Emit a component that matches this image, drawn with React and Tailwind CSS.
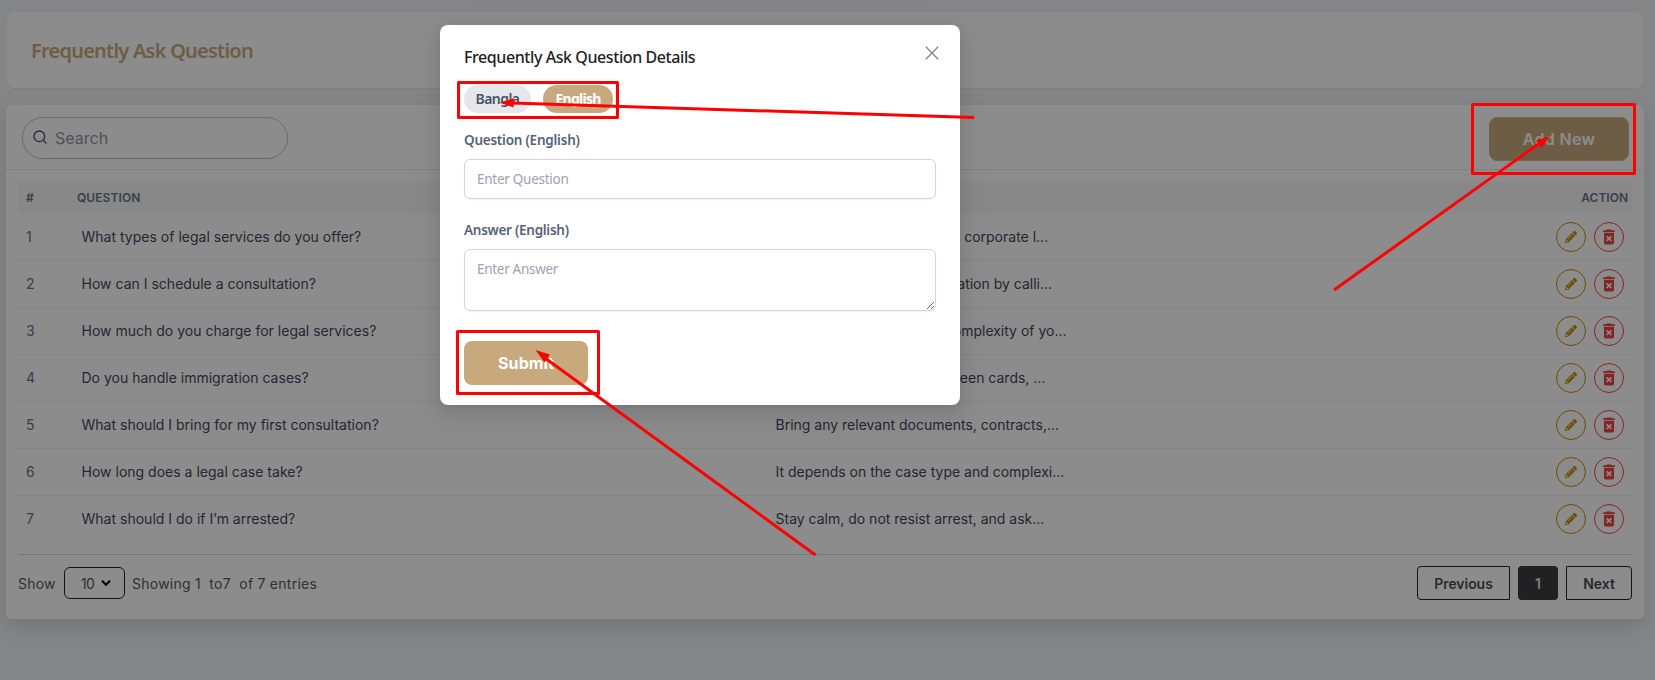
import { FaPencilAlt } from "react-icons/fa";
import { MdDeleteForever } from "react-icons/md";
import { Search } from "lucide-react";

const rows = [
  ["What types of legal services do you offer?", "We provide civil, family, and corporate l..."],
  ["How can I schedule a consultation?", "You can schedule a consultation by calli..."],
  ["How much do you charge for legal services?", "Fees depend on size and complexity of yo..."],
  ["Do you handle immigration cases?", "Yes, we assist with visas, green cards, ..."],
  ["What should I bring for my first consultation?", "Bring any relevant documents, contracts,..."],
  ["How long does a legal case take?", "It depends on the case type and complexi..."],
  ["What should I do if I’m arrested?", "Stay calm, do not resist arrest, and ask..."],
];

function Row({ index, question, answer, last }) {
  return (
    <div className={`flex h-[47px] items-center border-b text-[14px] ${last ? "border-transparent" : "border-[#eeeeef]"}`}>
      <div className="w-[63.5px] pb-[2px] pl-2 text-[#64748b]">{index}</div>
      <div className="w-[694px] pb-[2px] tracking-[0.01px] text-[#3f4a5c]">{question}</div>
      <div className="flex-1 pb-[2px] text-[#3f4a5c]">{answer}</div>
      <div className="flex gap-2 pr-2">
        <button className="flex size-[30px] items-center justify-center rounded-full border border-[#ca8a04] text-[#ca8a04]">
          <FaPencilAlt size={12} />
        </button>
        <button className="flex size-[30px] items-center justify-center rounded-full border border-[#ef4444] text-[#ef4444]">
          <MdDeleteForever size={20} />
        </button>
      </div>
    </div>
  );
}

function Pagination() {
  return (
    <div className="mt-[11px] flex items-start justify-between border-t border-[#d6d8da] pt-[11px] text-[14px] text-[#5a5a5a]">
      <div className="flex h-[34px] items-center">
        <span className="w-[46px] tracking-[0.2px]">Show</span>
        <div className="flex h-8 w-[61px] items-center rounded-md border border-[#212529] pl-4">
          <span className="tracking-[-0.8px]">10</span>
          <svg className="ml-[7px]" width="10" height="8" viewBox="0 0 10 8" fill="none" stroke="#000" strokeWidth="2">
            <path d="M1 1.8 5 5.8 9 1.8" />
          </svg>
        </div>
        <span className="ml-[7px] whitespace-pre tracking-[0.25px]">Showing 1  to7  of 7 entries</span>
      </div>
      <div className="flex h-[34px] gap-2 font-semibold text-[#4a4f54]">
        <button className="w-[93px] rounded-l border border-[#212529] tracking-[-0.05px]">Previous</button>
        <button className="w-10 rounded bg-[#3a3d40] text-[#e5e5e5]">1</button>
        <button className="w-[66px] rounded-r border border-[#212529]">Next</button>
      </div>
    </div>
  );
}

function Page() {
  return (
    <div className="h-[680px] bg-[#f0f2f5] pt-3 pl-[6px]">
      <div className="ml-px flex h-[76px] w-[1636px] items-center rounded-lg bg-white pt-[2px] pl-6 shadow-[0_1px_2px_rgba(0,0,0,0.05)]">
        <h1 className="font-['Noto_Sans'] text-[20px] leading-none font-semibold tracking-[-0.77px] text-[#c8a97e]">
          Frequently Ask Question
        </h1>
      </div>
      <div className="mt-[17px] h-[514px] w-[1638px] rounded-md bg-white shadow-[0_8px_20px_rgba(0,0,0,0.12)]">
        <div className="flex h-[65px] items-start justify-between border-b border-[#e9eaec] pt-3 pr-[15px] pl-4">
          <div className="flex h-[42px] w-[266px] items-center rounded-full border border-[#c3c5c8] pl-[9px] shadow-[0_1px_2px_rgba(0,0,0,0.05)]">
            <Search size={16} strokeWidth={2} className="mb-[2px] text-[#475569]" />
            <span className="ml-[7px] text-[16px] text-[#8e95a3]">Search</span>
          </div>
          <button className="h-[44px] w-[140px] rounded-lg border border-[#d5b78c] bg-[#c8a97e] pb-px text-[16px] font-semibold tracking-[0.3px] text-white">
            Add New
          </button>
        </div>
        <div className="px-3 pt-3">
          <div className="flex h-8 items-center bg-[#f8f8f8] text-[12px] font-semibold text-[#64748b]">
            <div className="w-[59px] pl-2">#</div>
            <div className="w-[698px] tracking-[0.08px]">QUESTION</div>
            <div className="flex-1">ANSWER</div>
            <div className="pr-1">ACTION</div>
          </div>
          {rows.map(([question, answer], i) => (
            <Row key={question} index={i + 1} question={question} answer={answer} last={i === rows.length - 1} />
          ))}
          <Pagination />
        </div>
      </div>
    </div>
  );
}

function Modal() {
  return (
    <div className="absolute top-[25px] left-[440px] h-[380px] w-[520px] rounded-lg bg-white px-6 pt-5 font-['Noto_Sans'] shadow-[0_6px_16px_0_rgba(0,0,0,0.08),0_3px_6px_-4px_rgba(0,0,0,0.12),0_9px_28px_8px_rgba(0,0,0,0.05)]">
      <div className="flex h-6 items-center justify-between">
        <h2 className="text-[16px] font-medium tracking-[-0.42px] whitespace-nowrap text-[#1f1f1f]">
          Frequently Ask Question Details
        </h2>
        <svg className="-mt-2 -mr-[3px]" width="14" height="14" viewBox="0 0 14 14" fill="none" stroke="#858585" strokeWidth="1.3">
          <path d="M.8.8 13.2 13.2M13.2.8.8 13.2" />
        </svg>
      </div>
      <div className="mt-4 flex gap-3 text-[14px] font-semibold">
        <button className="h-7 w-[67px] rounded-full bg-[#e5e7eb] pb-px tracking-[-0.55px] text-[#475569]">Bangla</button>
        <button className="h-7 w-[70px] rounded-full bg-[#c8a97e] pb-px font-bold tracking-[-0.75px] text-white">English</button>
      </div>
      <label className="mt-[17px] block h-5 text-[13.5px] leading-5 font-semibold tracking-[-0.23px] text-[#56637a]">
        Question (English)
      </label>
      <input
        placeholder="Enter Question"
        className="mt-[9px] block h-10 w-full rounded-md border border-[#d1d5db] px-3 text-[13.5px] tracking-[-0.27px] shadow-xs placeholder:text-[#9ca3af]"
      />
      <label className="mt-[21px] block h-5 text-[13.5px] leading-5 font-semibold tracking-[-0.27px] text-[#56637a]">
        Answer (English)
      </label>
      <textarea
        placeholder="Enter Answer"
        className="mt-[9px] block h-[62px] w-full rounded-md border border-[#d1d5db] px-3 py-[9px] text-[13.5px] leading-5 tracking-[-0.3px] shadow-xs placeholder:text-[#9ca3af]"
      />
      <button className="mt-[30px] h-[44px] w-[124px] rounded-lg bg-[#c8a97e] pb-px font-['Inter'] text-[16px] font-bold tracking-[0.1px] text-white">
        Submit
      </button>
    </div>
  );
}

/* Red callouts that point at the controls to use. */
function Annotations() {
  return (
    <svg className="pointer-events-none absolute inset-0" width="1655" height="680" fill="none" stroke="#ff0000" strokeWidth="3">
      <rect x="458.5" y="82.5" width="159" height="35" strokeLinejoin="round" />
      <rect x="457.5" y="331.5" width="141" height="62" strokeLinejoin="round" />
      <rect x="1472.5" y="104.5" width="162" height="69" strokeLinejoin="round" />
      <path d="M974 117.5 512 103" />
      <path d="M815.5 555 545 358" />
      <path d="M1334 290 1540 143" />
      <g fill="#ff0000" stroke="none">
        <path d="M499.5 102.5 514 98.3 513.6 107.5Z" />
        <path d="M535.5 350 550 354.5 544.5 362.5Z" />
        <path d="M1550 136 1541.5 148 1536 140.5Z" />
      </g>
    </svg>
  );
}

export default function App() {
  return (
    <div className="relative h-[680px] w-[1655px] overflow-hidden font-['Inter',sans-serif]">
      <Page />
      <div className="absolute inset-0 bg-black/45" />
      <Modal />
      <Annotations />
    </div>
  );
}
